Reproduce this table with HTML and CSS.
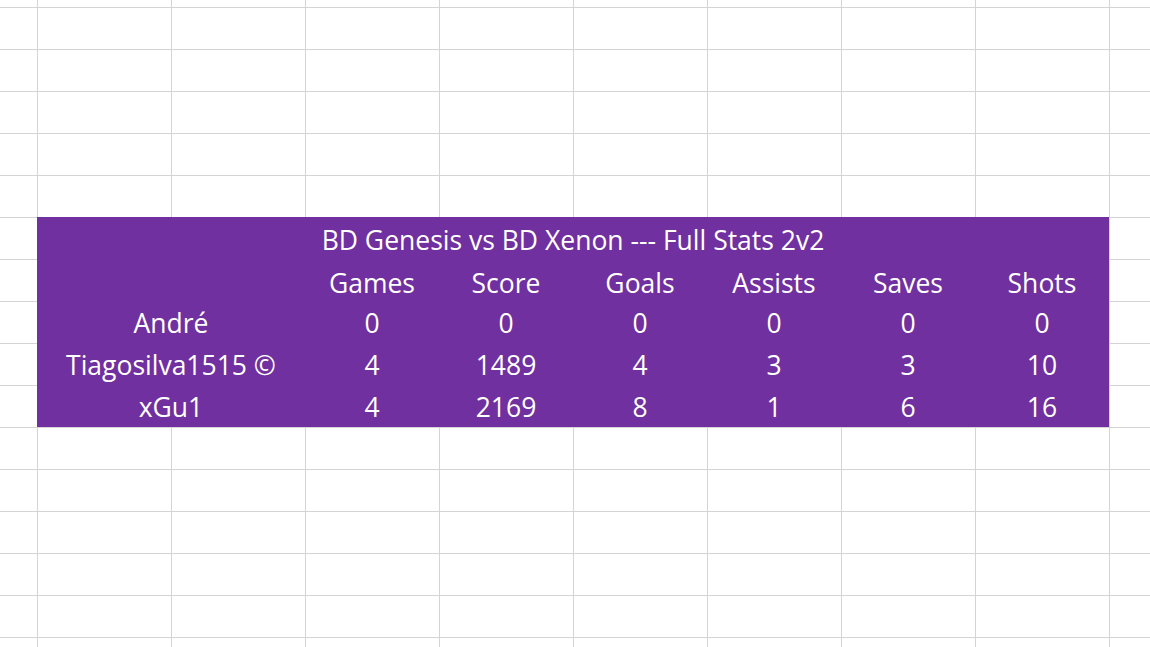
FILE: index.html
```html
<!DOCTYPE html>
<html>
<head>
<meta charset="utf-8">
<link rel="stylesheet" href="styles.css">
</head>
<body>
<div class="sheet">
  <div class="stats">
    <div class="title">BD Genesis vs BD Xenon --- Full Stats 2v2</div>
    <div class="cell name"></div>
    <div class="cell head">Games</div>
    <div class="cell head">Score</div>
    <div class="cell head">Goals</div>
    <div class="cell head">Assists</div>
    <div class="cell head">Saves</div>
    <div class="cell head">Shots</div>

    <div class="cell name">André</div>
    <div class="cell">0</div>
    <div class="cell">0</div>
    <div class="cell">0</div>
    <div class="cell">0</div>
    <div class="cell">0</div>
    <div class="cell">0</div>

    <div class="cell name">Tiagosilva1515 ©</div>
    <div class="cell">4</div>
    <div class="cell">1489</div>
    <div class="cell">4</div>
    <div class="cell">3</div>
    <div class="cell">3</div>
    <div class="cell">10</div>

    <div class="cell name">xGu1</div>
    <div class="cell">4</div>
    <div class="cell">2169</div>
    <div class="cell">8</div>
    <div class="cell">1</div>
    <div class="cell">6</div>
    <div class="cell">16</div>
  </div>
</div>
</body>
</html>
```
FILE: styles.css
```css
html, body {
  margin: 0;
  padding: 0;
  background: #ffffff;
}
.sheet {
  width: 1150px;
  height: 647px;
  overflow: hidden;
  background-color: #ffffff;
  background-image:
    linear-gradient(to right, #d4d4d4 1px, transparent 1px),
    linear-gradient(to bottom, #d4d4d4 1px, transparent 1px);
  background-size: 134px 100%, 100% 42px;
  background-position: 37px 0, 0 7px;
  padding-top: 217px;
  padding-left: 37px;
  box-sizing: border-box;
}
.stats {
  width: 1072px;
  height: 210px;
  background: #7030a0;
  display: grid;
  grid-template-columns: 268px repeat(6, 134px);
  grid-auto-rows: 42px;
  color: #ffffff;
  font-family: "Open Sans", sans-serif;
  font-size: 26.5px;
}
.title {
  grid-column: 1 / -1;
  text-align: center;
  line-height: 46px;
  white-space: nowrap;
}
.cell {
  text-align: center;
  line-height: 45px;
  white-space: nowrap;
}
.head {
  line-height: 48px;
}
```
